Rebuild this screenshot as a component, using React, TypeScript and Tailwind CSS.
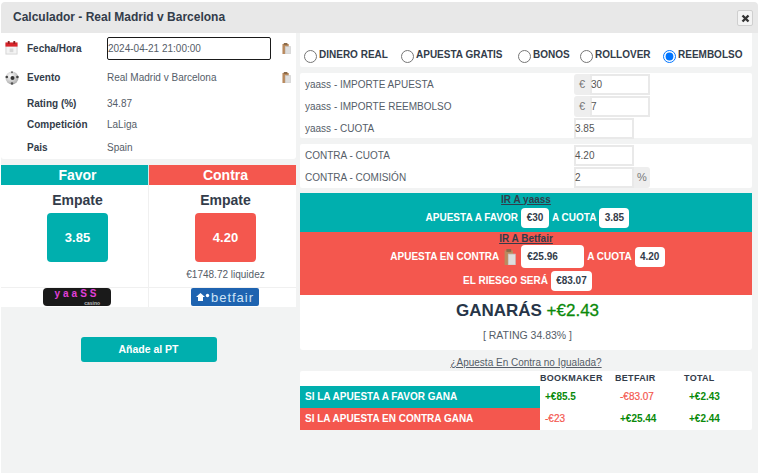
import React from "react";

const Clip = ({ big }: { big?: boolean }) => (
  <svg width={big ? 12 : 9} height={big ? 16 : 11} viewBox="0 0 10 11" preserveAspectRatio="none" className="shrink-0">
    <rect x="0.5" y="1" width="7" height="10" fill="#b98a5e" />
    <rect x="2" y="0" width="4" height="2" fill="#8a6a4a" />
    <rect x="3.5" y="3.5" width="6" height="7.5" fill="#dedede" stroke="#c4c4c4" strokeWidth="0.5" />
  </svg>
);

const Calendar = () => (
  <svg width="13" height="14" viewBox="0 0 14 15" className="shrink-0">
    <rect x="1" y="3" width="12" height="11" fill="#f4f4f4" stroke="#d4d4d4" />
    <rect x="0.5" y="1.5" width="13" height="4.5" fill="#d8232a" />
    <rect x="3" y="0" width="2" height="3" fill="#8c1d1d" />
    <rect x="9" y="0" width="2" height="3" fill="#8c1d1d" />
    <rect x="5" y="8" width="4" height="4" fill="#d8d8d8" />
  </svg>
);

const Ball = () => (
  <svg width="14" height="14" viewBox="0 0 14 14" className="shrink-0">
    <defs>
      <radialGradient id="b" cx="40%" cy="35%" r="70%">
        <stop offset="0" stopColor="#ffffff" />
        <stop offset="1" stopColor="#a8a8a8" />
      </radialGradient>
    </defs>
    <circle cx="7" cy="7" r="6.5" fill="url(#b)" />
    <circle cx="7.5" cy="7" r="2" fill="#333" />
    <circle cx="1.8" cy="6" r="1.3" fill="#444" />
    <circle cx="12.4" cy="6" r="1.3" fill="#444" />
    <circle cx="7" cy="12.5" r="1.3" fill="#555" />
    <circle cx="7" cy="1.2" r="1" fill="#666" />
  </svg>
);

const InfoRow = ({ label, icon, className, children }: { label: string; icon?: React.ReactNode; className: string; children: React.ReactNode }) => (
  <div className={`flex items-center ${className}`}>
    <div className="w-[26px] pl-[4px] flex items-center">{icon}</div>
    <div className="w-[80px] font-bold text-[#333c4a] pt-[1px]">{label}</div>
    {children}
  </div>
);

const Radio = ({ label, checked, className }: { label: string; checked?: boolean; className: string }) => (
  <label className={`flex items-center ${className}`}>
    <input type="radio" checked={!!checked} readOnly className="m-0 mr-[2px] w-[13px] h-[13px] mt-[1px]" />
    <span className="font-bold text-[10px] text-[#333c4a] -mt-[1px]">{label}</span>
  </label>
);

const Field = ({ label, children }: { label: string; children: React.ReactNode }) => (
  <div className="flex items-center h-[22px]">
    <div className="w-[274px] pl-[5px] pt-[1px] text-[#555d68]">{label}</div>
    {children}
  </div>
);

const Addon = ({ children, right }: { children: React.ReactNode; right?: boolean }) => (
  <div className={`h-[21px] w-[16px] bg-[#eeeeee] text-[#777] text-[11px] flex items-center justify-center ${right ? "rounded-r-[3px]" : "rounded-l-[3px]"}`}>{children}</div>
);

const Input = ({ value, w }: { value: string; w: string }) => (
  <div className={`h-[21px] ${w} border-2 border-[#e9e9e9] bg-white text-[#555] text-[10px] leading-[18px] indent-[-1px]`}>{value}</div>
);

const Chip = ({ children, className }: { children: React.ReactNode; className: string }) => (
  <span className={`inline-flex items-center justify-center h-[20px] bg-white rounded-[4px] text-[#333c4a] font-bold ${className}`}>{children}</span>
);

export default function App() {
  return (
    <div className="w-[760px] h-[473px] bg-white overflow-hidden font-['Liberation_Sans',Arial,sans-serif] text-[10px] leading-none">
      <div className="w-[757px] h-[471px] mt-[2px] ml-[1px] bg-[#f2f3f3] rounded-t-[4px] overflow-hidden">
        <div className="h-[31px] bg-[#e8e8e8] flex items-center justify-between pl-[12px] pr-[5px] rounded-t-[4px]">
          <span className="font-bold text-[12px] text-[#333c4a] -mt-[1px]">Calculador - Real Madrid v Barcelona</span>
          <button className="w-[16px] h-[16px] bg-[#f4f4f4] border border-[#cfcfcf] rounded-[2px] flex items-center justify-center mt-[1px]">
            <svg width="9" height="9" viewBox="0 0 9 9"><path d="M1.5 1.5 L7.5 7.5 M7.5 1.5 L1.5 7.5" stroke="#333" strokeWidth="2.4" /></svg>
          </button>
        </div>
        <div className="flex">
          <div className="w-[295px] shrink-0">
            <div className="h-[126px] bg-white rounded-b-[3px] flex flex-col">
              <InfoRow className="h-[30px]" label="Fecha/Hora" icon={<Calendar />}>
                <div className="w-[164px] h-[23px] border-[1.5px] border-[#1a1a1a] rounded-[2px] flex items-center text-[#555d68] pt-[1px]">2024-04-21 21:00:00</div>
                <div className="ml-[11px]"><Clip /></div>
              </InfoRow>
              <InfoRow className="h-[29px]" label="Evento" icon={<Ball />}>
                <div className="w-[164px] text-[#555d68] pt-[1px]">Real Madrid v Barcelona</div>
                <div className="ml-[11px]"><Clip /></div>
              </InfoRow>
              <InfoRow className="h-[22px]" label="Rating (%)"><span className="text-[#555d68] pt-[1px]">34.87</span></InfoRow>
              <InfoRow className="h-[21px]" label="Competición"><span className="text-[#555d68] pt-[1px]">LaLiga</span></InfoRow>
              <InfoRow className="h-[24px]" label="Pais"><span className="text-[#555d68] pt-[1px]">Spain</span></InfoRow>
            </div>
            <div className="mt-[6px] bg-white">
              <div className="grid grid-cols-[148px_147px] h-[20px] text-white font-bold text-[14px]">
                <div className="bg-[#00afae] flex items-center justify-center pl-[6px] border-r border-[#cfe9e8]">Favor</div>
                <div className="bg-[#f4574e] flex items-center justify-center pl-[6px]">Contra</div>
              </div>
              <div className="grid grid-cols-[148px_147px] h-[103px] border-b border-[#f0f0f0]">
                <div className="flex flex-col items-center border-r border-[#f0f0f0] pl-[6px] pt-[8px]">
                  <div className="font-bold text-[14px] text-[#333c4a] h-[16px]">Empate</div>
                  <div className="mt-[4px] w-[61px] h-[49px] bg-[#00afae] rounded-[4px] text-white font-bold text-[13px] flex items-center justify-center">3.85</div>
                </div>
                <div className="flex flex-col items-center pl-[6px] pt-[8px]">
                  <div className="font-bold text-[14px] text-[#333c4a] h-[16px]">Empate</div>
                  <div className="mt-[4px] w-[61px] h-[49px] bg-[#f4574e] rounded-[4px] text-white font-bold text-[13px] flex items-center justify-center">4.20</div>
                  <div className="mt-[8px] text-[#555d68]">€1748.72 liquidez</div>
                </div>
              </div>
              <div className="grid grid-cols-[148px_147px] h-[19px]">
                <div className="flex items-start justify-center pl-[5px] border-r border-[#f0f0f0]">
                  <div className="w-[68px] h-[18px] bg-[#1a1a1a] rounded-[4px] flex flex-col items-center overflow-hidden">
                    <span className="font-bold text-[10px] leading-[12px] text-[#e040d8] tracking-[3px]">yaaSS</span>
                    <span className="self-end mr-[11px] text-[5px] leading-[6px] font-bold text-[#bbb]">casino</span>
                  </div>
                </div>
                <div className="flex items-start justify-center pl-[5px]">
                  <div className="w-[68px] h-[18px] bg-[#1e63b0] rounded-[2px] flex items-center justify-center gap-[1px]">
                    <svg width="14" height="10" viewBox="0 0 14 10"><path d="M0 5 L4.5 1 L9 5 L7 5 L7 9 L2 9 L2 5Z" fill="#fff" /><circle cx="11.5" cy="3.5" r="1.7" fill="#fff" /></svg>
                    <span className="text-[13px] text-[#cfe3f7] font-normal tracking-[1px]">betfair</span>
                  </div>
                </div>
              </div>
            </div>
            <button className="block mx-auto mt-[30px] w-[136px] h-[25px] bg-[#00afae] rounded-[3px] text-white font-bold text-[10.5px]">Añade al PT</button>
          </div>

          <div className="w-[452px] ml-[4px] shrink-0">
            <div className="h-[34px] bg-white flex items-center pt-[11px] pl-[4px] rounded-b-[2px]">
              <Radio label="DINERO REAL" className="w-[97px]" />
              <Radio label="APUESTA GRATIS" className="w-[117px]" />
              <Radio label="BONOS" className="w-[62px]" />
              <Radio label="ROLLOVER" className="w-[83px]" />
              <Radio label="REEMBOLSO" checked className="" />
            </div>
            <div className="mt-[6px] h-[65px] bg-white rounded-[2px]">
              <Field label="yaass - IMPORTE APUESTA"><Addon>€</Addon><Input value="30" w="w-[60px]" /></Field>
              <Field label="yaass - IMPORTE REEMBOLSO"><Addon>€</Addon><Input value="7" w="w-[60px]" /></Field>
              <Field label="yaass - CUOTA"><Input value="3.85" w="w-[60px]" /></Field>
            </div>
            <div className="mt-[6px] h-[44px] bg-white rounded-[2px]">
              <Field label="CONTRA - CUOTA"><Input value="4.20" w="w-[60px]" /></Field>
              <Field label="CONTRA - COMISIÓN"><Input value="2" w="w-[60px]" /><Addon right>%</Addon></Field>
            </div>
            <div className="mt-[5px] bg-white rounded-b-[3px] h-[157px]">
              <div className="h-[39px] bg-[#00afae] flex flex-col items-center">
                <div className="text-[#333c4a] font-bold underline h-[12px] pt-[2px]">IR A yaass</div>
                <div className="flex items-center mt-[3px] pl-[3px] text-white font-bold">
                  APUESTA A FAVOR<Chip className="w-[28px] ml-[3px] mr-[3px]">€30</Chip>A CUOTA<Chip className="w-[30px] ml-[3px]">3.85</Chip>
                </div>
              </div>
              <div className="h-[63px] bg-[#f4574e] flex flex-col items-center">
                <div className="text-[#333c4a] font-bold underline h-[12px] pt-[2px]">IR A Betfair</div>
                <div className="flex items-center mt-[1px] pl-[3px] text-white font-bold">
                  APUESTA EN CONTRA<span className="mx-[5px] flex"><Clip big /></span><Chip className="w-[63px] h-[23px] justify-start pl-[6px] mr-[3px]">€25.96</Chip>A CUOTA<Chip className="w-[30px] ml-[3px]">4.20</Chip>
                </div>
                <div className="flex items-center mt-[3px] pl-[3px] text-white font-bold">
                  EL RIESGO SERÁ<Chip className="w-[41px] ml-[3px]">€83.07</Chip>
                </div>
              </div>
              <div className="flex flex-col items-center pt-[6px] pl-[3px]">
                <div className="font-bold text-[17px] leading-[20px] text-[#273548]">GANARÁS <span className="font-normal text-[#0a8a0a] [-webkit-text-stroke:0.3px_#0a8a0a]">+€2.43</span></div>
                <div className="mt-[9px] text-[10.5px] text-[#555d68]">[ RATING 34.83% ]</div>
              </div>
            </div>
            <div className="mt-[7px] text-center underline text-[#555d68] h-[11px] leading-[11px]">¿Apuesta En Contra no Igualada?</div>
            <div className="mt-[3px] bg-white h-[59px] rounded-[2px]">
              <div className="grid grid-cols-[240px_75px_69px_68px] h-[15px] font-bold text-[#333c4a] text-[9px] tracking-[0.3px] items-center">
                <div /><div>BOOKMAKER</div><div>BETFAIR</div><div>TOTAL</div>
              </div>
              <div className="grid grid-cols-[240px_75px_69px_68px] h-[22px] items-center font-bold">
                <div className="bg-[#00afae] h-full flex items-center pl-[5px] text-white">SI LA APUESTA A FAVOR GANA</div>
                <div className="pl-[5px] text-[#0a8a0a]">+€85.5</div>
                <div className="pl-[5px] text-[#f4574e] font-normal [-webkit-text-stroke:0.2px_#f4574e]">-€83.07</div>
                <div className="pl-[5px] text-[#0a8a0a]">+€2.43</div>
              </div>
              <div className="grid grid-cols-[240px_75px_69px_68px] h-[22px] items-center font-bold">
                <div className="bg-[#f4574e] h-full flex items-center pl-[5px] text-white">SI LA APUESTA EN CONTRA GANA</div>
                <div className="pl-[5px] text-[#f4574e] font-normal [-webkit-text-stroke:0.2px_#f4574e]">-€23</div>
                <div className="pl-[5px] text-[#0a8a0a]">+€25.44</div>
                <div className="pl-[5px] text-[#0a8a0a]">+€2.44</div>
              </div>
            </div>
          </div>
        </div>
      </div>
    </div>
  );
}
